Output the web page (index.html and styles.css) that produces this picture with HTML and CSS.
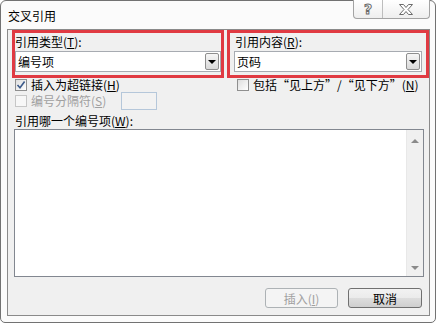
FILE: index.html
```html
<!DOCTYPE html>
<html>
<head>
    <meta charset="utf-8">
    <title>交叉引用</title>
    <link rel="stylesheet" href="styles.css">
</head>
<body>
    <div class="window">
        <div class="titlebar">
            <span class="title">交叉引用</span>
            <div class="caption-btns">
                <span class="cap help">?</span>
                <span class="cap close">
                    <svg width="14" height="11" viewBox="0 0 14 11">
                        <polygon points="0.5,0.5 4.5,0.5 7,3.5 9.5,0.5 13.5,0.5 9,5.5 13.5,10.5 9.5,10.5 7,7.5 4.5,10.5 0.5,10.5 5,5.5" fill="#fff" stroke="#6b6b6b" stroke-width="1"/>
                    </svg>
                </span>
            </div>
        </div>

        <div class="panel">
            <div class="top-row">
                <div class="mark mark-type">
                    <div class="label">引用类型(<u>T</u>):</div>
                    <div class="combo">
                        <span class="combo-text">编号项</span>
                        <span class="combo-btn"><span class="tri"></span></span>
                    </div>
                </div>
                <div class="mark mark-content">
                    <div class="label">引用内容(<u>R</u>):</div>
                    <div class="combo">
                        <span class="combo-text">页码</span>
                        <span class="combo-btn"><span class="tri"></span></span>
                    </div>
                </div>
            </div>

            <div class="opt-row row-one">
                <label class="check">
                    <span class="cb">
                        <svg width="10" height="10" viewBox="0 0 10 10">
                            <path d="M1.5 5 L4 7.8 L8.6 1.6" fill="none" stroke="#3b5a8a" stroke-width="1.6"/>
                        </svg>
                    </span>
                    <span class="check-text">插入为超链接(<u>H</u>)</span>
                </label>
                <label class="check">
                    <span class="cb"></span>
                    <span class="check-text">包括“见上方”/“见下方”(<u>N</u>)</span>
                </label>
            </div>

            <div class="opt-row row-two">
                <div class="check disabled">
                    <span class="cb"></span>
                    <span class="check-text">编号分隔符(<u>S</u>)</span>
                    <span class="sep-input"></span>
                </div>
            </div>

            <div class="list-label">引用哪一个编号项(<u>W</u>):</div>
            <div class="listbox">
                <div class="scroll">
                    <span class="arrow up"></span>
                    <span class="arrow down"></span>
                </div>
            </div>

            <div class="buttons">
                <button class="btn btn-insert" disabled>插入(<u>I</u>)</button>
                <button class="btn btn-cancel">取消</button>
            </div>
        </div>
    </div>
</body>
</html>
```

FILE: styles.css
```css
body {
    margin: 0;
    background: #fff;
    font-family: "Noto Sans CJK SC", "DejaVu Sans", sans-serif;
    font-size: 12px;
    color: #000;
}

.window {
    width: 436px;
    height: 323px;
    box-sizing: border-box;
    border: 1px solid #727272;
    border-radius: 6px 6px 5px 5px;
    background: #fbfbfb;
    padding: 0 5px 6px 6px;
    display: flex;
    flex-direction: column;
}

.titlebar {
    height: 28px;
    display: flex;
    justify-content: space-between;
    align-items: flex-start;
}

.title {
    padding: 7px 0 0 1px;
    line-height: 16px;
}

.caption-btns {
    display: flex;
    margin-top: -1px;
    border: 1px solid #a3a3a3;
    border-top: none;
    border-radius: 0 0 4px 4px;
    background: linear-gradient(#ffffff, #eeeeee);
}

.cap {
    height: 18px;
    display: flex;
    align-items: center;
    justify-content: center;
}

.help {
    width: 28px;
    border-right: 1px solid #bdbdbd;
    font-family: "DejaVu Sans", sans-serif;
    font-weight: bold;
    font-size: 14px;
    color: #fff;
    -webkit-text-stroke: 1px #6b6b6b;
}

.close {
    width: 46px;
}

.panel {
    flex: 1;
    border: 1px solid #8a8a8a;
    background: #f0f0f0;
    display: flex;
    flex-direction: column;
}

/* 上段の赤枠 */
.top-row {
    display: flex;
    gap: 3px;
    height: 48px;
    padding-left: 4px;
}

.mark {
    height: 48px;
    box-sizing: border-box;
    border: 3px solid #e03a42;
    display: flex;
    flex-direction: column;
}

.mark-type {
    width: 212px;
}

.mark-content {
    width: 202px;
    padding: 0 4px;
}

.label {
    height: 18px;
    line-height: 18px;
}

.mark-content .label {
    padding-left: 1px;
}

.combo {
    height: 21px;
    box-sizing: border-box;
    border: 1px solid #a7abb1;
    background: #fff;
    padding: 1px;
    display: flex;
    align-items: center;
    justify-content: space-between;
}

.combo-text {
    padding-left: 1px;
    line-height: 17px;
}

.combo-btn {
    width: 14px;
    height: 17px;
    box-sizing: border-box;
    border: 1px solid #8e8e8e;
    border-radius: 2px;
    background: linear-gradient(#f6f6f6, #d9d9d9);
    display: flex;
    align-items: center;
    justify-content: center;
}

.tri {
    width: 0;
    height: 0;
    border-left: 4px solid transparent;
    border-right: 4px solid transparent;
    border-top: 4px solid #000;
}

/* チェックボックス */
.opt-row {
    display: grid;
    grid-template-columns: 222px 1fr;
    padding-left: 7px;
    align-items: center;
    line-height: 14px;
}

.row-one {
    height: 12px;
}

.row-two {
    height: 22px;
}

.check {
    display: flex;
    align-items: center;
    gap: 4px;
    white-space: nowrap;
}

.cb {
    width: 12px;
    height: 12px;
    box-sizing: border-box;
    border: 1px solid #8f8f8f;
    background: linear-gradient(135deg, #dedede, #ffffff);
    display: flex;
    align-items: center;
    justify-content: center;
}

.disabled {
    color: #a0a0a0;
}

.disabled .cb {
    border-color: #c6c6c6;
    background: #f7f7f7;
}

.sep-input {
    width: 36px;
    height: 18px;
    box-sizing: border-box;
    margin-left: 11px;
    border: 1px solid #b5c7da;
    background: #f2f2f2;
}

.list-label {
    height: 17px;
    line-height: 17px;
    padding-left: 7px;
}

.listbox {
    margin-left: 6px;
    width: 410px;
    height: 148px;
    box-sizing: border-box;
    border: 1px solid #828790;
    background: #fff;
    display: flex;
    justify-content: flex-end;
}

.scroll {
    width: 17px;
    box-sizing: border-box;
    border-left: 1px solid #e8e8e8;
    background: #f0f0f0;
    padding: 9px 0 6px;
    display: flex;
    flex-direction: column;
    align-items: center;
    justify-content: space-between;
}

.arrow {
    width: 0;
    height: 0;
    border-left: 4px solid transparent;
    border-right: 4px solid transparent;
}

.arrow.up {
    border-bottom: 4px solid #8a8a8a;
}

.arrow.down {
    border-top: 4px solid #8a8a8a;
}

.buttons {
    display: flex;
    justify-content: flex-end;
    gap: 10px;
    margin-top: 11px;
    padding-right: 7px;
}

.btn {
    height: 20px;
    padding: 0;
    font: inherit;
    border-radius: 3px;
}

.btn-insert {
    width: 73px;
    border: 1px solid #adb2b5;
    background: #f4f4f4;
    color: #a0a0a0;
}

.btn-cancel {
    width: 74px;
    border: 1px solid #707070;
    background: linear-gradient(#f2f2f2 0%, #ebebeb 50%, #dddddd 51%, #cfcfcf 100%);
    color: #000;
}
```
